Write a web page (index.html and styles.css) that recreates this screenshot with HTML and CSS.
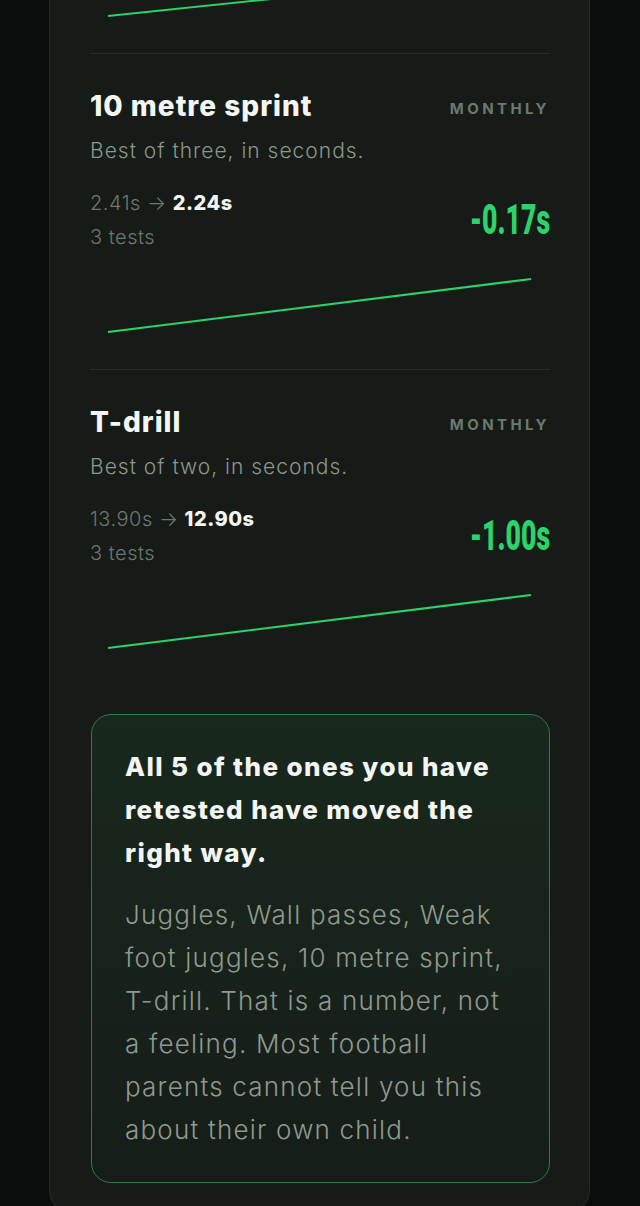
FILE: index.html
```html
<!DOCTYPE html>
<html lang="en">
<head>
    <meta charset="UTF-8">
    <meta name="viewport" content="width=device-width, initial-scale=1.0">
    <title>Progress</title>
    <link rel="stylesheet" href="styles.css">
</head>
<body>
    <div class="page">
        <section class="card">
            <div class="metric metric-tail">
                <svg class="spark spark-tail" viewBox="0 54 460 36" preserveAspectRatio="none">
                    <polyline points="18,70 441,26" />
                </svg>
            </div>

            <div class="metric">
                <div class="metric-head">
                    <h2>10 metre sprint</h2>
                    <span class="cadence">MONTHLY</span>
                </div>
                <p class="metric-desc">Best of three, in seconds.</p>
                <div class="metric-stats">
                    <div class="stat-text">
                        <div class="change"><span class="from">2.41s &rarr;</span> <strong>2.24s</strong></div>
                        <div class="tests">3 tests</div>
                    </div>
                    <div class="delta">-0.17s</div>
                </div>
                <svg class="spark" viewBox="0 0 460 90" preserveAspectRatio="none">
                    <polyline points="18,70 441,17" />
                </svg>
            </div>

            <div class="metric metric-last">
                <div class="metric-head">
                    <h2>T-drill</h2>
                    <span class="cadence">MONTHLY</span>
                </div>
                <p class="metric-desc">Best of two, in seconds.</p>
                <div class="metric-stats">
                    <div class="stat-text">
                        <div class="change"><span class="from">13.90s &rarr;</span> <strong>12.90s</strong></div>
                        <div class="tests">3 tests</div>
                    </div>
                    <div class="delta">-1.00s</div>
                </div>
                <svg class="spark" viewBox="0 0 460 90" preserveAspectRatio="none">
                    <polyline points="18,70 441,17" />
                </svg>
            </div>

            <div class="summary">
                <h3>All 5 of the ones you have retested have moved the right way.</h3>
                <p>Juggles, Wall passes, Weak foot juggles, 10 metre sprint, T-drill. That is a number, not a feeling. Most football parents cannot tell you this about their own child.</p>
            </div>
        </section>
    </div>
</body>
</html>
```

FILE: styles.css
```css
body {
    margin: 0;
    background: #0b0d0c;
    font-family: Inter, "Noto Sans", sans-serif;
    color: #f4f6f4;
}
.page {
    padding: 0 50px 40px 49px;
}
.card {
    background: #161b17;
    border: 1px solid #252b26;
    border-top: none;
    border-radius: 0 0 24px 24px;
    padding: 0 39px 30px 40px;
}
.metric {
    padding: 36px 0 17px;
    border-bottom: 1px solid #262c27;
}
.metric-last {
    border-bottom: none;
}
.metric-tail {
    padding: 0 0 17px;
}
.metric-head {
    display: flex;
    justify-content: space-between;
    align-items: flex-start;
}
h2 {
    margin: 0;
    font-size: 28px;
    line-height: 32px;
    font-weight: 800;
    letter-spacing: 1px;
}
.cadence {
    margin-top: 10px;
    font-size: 15px;
    line-height: 18px;
    font-weight: 700;
    letter-spacing: 3.4px;
    color: #6d786e;
}
.metric-desc {
    margin: 15px 0 0;
    font-size: 21px;
    line-height: 28px;
    font-weight: 300;
    letter-spacing: 1px;
    color: #8c978d;
}
.metric-stats {
    margin-top: 21px;
    display: flex;
    justify-content: space-between;
    align-items: center;
}
.change, .tests {
    font-size: 20px;
    line-height: 34px;
    font-weight: 300;
    letter-spacing: 0.5px;
    color: #6d776e;
}
.change strong {
    color: #f4f6f4;
    font-weight: 800;
}
.delta {
    font-family: Roboto, "Liberation Sans", sans-serif;
    font-weight: 900;
    font-size: 43px;
    line-height: 40px;
    color: #2bd46b;
    transform: scaleX(0.62);
    transform-origin: right center;
    margin-top: -3px;
}
.spark {
    display: block;
    width: 460px;
    height: 90px;
    margin-top: 8px;
}
.spark-tail {
    height: 36px;
    margin-top: 0;
}
.spark polyline {
    fill: none;
    stroke: #2bd46b;
    stroke-width: 2;
}
.summary {
    margin: 29px 0 0 1px;
    border: 1px solid #2e7a48;
    border-radius: 20px;
    background: linear-gradient(180deg, #18281d 0%, #161d18 100%);
    padding: 30px 28px 31px 33px;
}
.summary h3 {
    margin: 0;
    font-size: 26px;
    line-height: 43px;
    font-weight: 800;
    letter-spacing: 1.4px;
}
.summary p {
    margin: 19px 0 0;
    font-size: 26px;
    line-height: 43px;
    font-weight: 300;
    letter-spacing: 1.2px;
    color: #8e9a8f;
}
```
